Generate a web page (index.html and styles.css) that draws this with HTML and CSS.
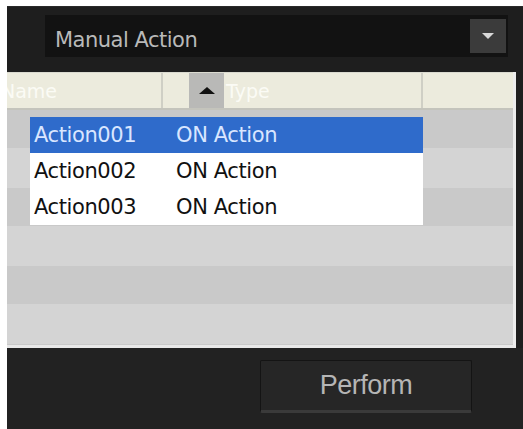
FILE: index.html
```html
<!DOCTYPE html>
<html lang="en">
<head>
    <meta charset="UTF-8">
    <title>Manual Action</title>
    <link rel="stylesheet" href="styles.css">
</head>
<body>

    <div class="panel">
        <div class="combo-row">
            <div class="combo">
                <span class="combo-text">Manual Action</span>
                <span class="combo-btn"><span class="arrow-down"></span></span>
            </div>
        </div>

        <div class="grid">
            <div class="grid-head">
                <div class="col col-name"><span class="head-label">Name</span></div>
                <div class="col col-type">
                    <span class="sort"><span class="arrow-up"></span></span>
                    <span>Type</span>
                </div>
                <div class="col col-extra"></div>
            </div>
            <div class="grid-body">
                <ul class="action-list">
                    <li class="selected"><span class="a-name">Action001</span><span>ON Action</span></li>
                    <li><span class="a-name">Action002</span><span>ON Action</span></li>
                    <li><span class="a-name">Action003</span><span>ON Action</span></li>
                </ul>
            </div>
        </div>

        <div class="footer">
            <button class="perform">Perform</button>
        </div>
    </div>

</body>
</html>
```

FILE: styles.css
```css
body {
    margin: 0;
    background: #fff;
    font-family: "DejaVu Sans", sans-serif;
}

.panel {
    margin: 6px 0 0 7px;
    height: 423px;
    background: #1e1e1e;
    display: flex;
    flex-direction: column;
}

.combo-row {
    padding: 8px 15px 0 38px;
    height: 66px;
    box-sizing: border-box;
    border-top: 1px solid #2a2a2a;
}

.combo {
    height: 42px;
    background: #121212;
    display: flex;
    align-items: center;
    justify-content: space-between;
    padding: 0 2px 0 10px;
    box-sizing: border-box;
}

.combo-text {
    color: #b9b9b9;
    font-size: 21px;
    letter-spacing: -0.5px;
    padding-top: 7px;
}

.combo-btn {
    width: 36px;
    height: 34px;
    background: #3b3b3b;
    display: flex;
    align-items: center;
    justify-content: center;
}

.arrow-down {
    width: 0;
    height: 0;
    border-left: 6px solid transparent;
    border-right: 6px solid transparent;
    border-top: 6px solid #d8d8d8;
}

.grid {
    margin-right: 7px;
    height: 276px;
    background: #cdcdcd;
    border-right: 3px solid #ececec;
    border-bottom: 3px solid #e8e8e8;
    box-sizing: border-box;
    display: flex;
    flex-direction: column;
}

.grid-head {
    height: 38px;
    box-sizing: border-box;
    display: flex;
    background: #ecebdd;
    border-bottom: 2px solid #c4c4bc;
    border-top: 1px solid #dadad0;
}

.col {
    display: flex;
    align-items: center;
    color: #fbfbf5;
    font-size: 19px;
    border-right: 2px solid #cfcfc5;
    box-sizing: border-box;
}

.col-name {
    width: 156px;
    overflow: hidden;
}

/* header text is scrolled a little past the left edge */
.head-label {
    margin-left: -6px;
}

.col-type {
    width: 260px;
    padding-left: 26px;
}

.col-extra {
    flex: 1;
    border-right: none;
}

.sort {
    width: 35px;
    align-self: stretch;
    background: #b9b9b7;
    display: flex;
    align-items: center;
    justify-content: center;
    margin-right: 2px;
}

.arrow-up {
    width: 0;
    height: 0;
    border-left: 8px solid transparent;
    border-right: 8px solid transparent;
    border-bottom: 7px solid #111;
}

.grid-body {
    flex: 1;
    padding: 7px 0 0 23px;
    background: repeating-linear-gradient(#c9c9c9 0 38px, #d4d4d4 38px 78px);
}

.action-list {
    list-style: none;
    margin: 0;
    padding: 0;
    width: 393px;
    background: #fff;
}

.action-list li {
    height: 36px;
    display: flex;
    align-items: center;
    padding-left: 4px;
    font-size: 21px;
    color: #111;
    letter-spacing: -0.4px;
}

.action-list li.selected {
    background: #2f6bcb;
    color: #d9e6ff;
}

.a-name {
    width: 142px;
}

.footer {
    flex: 1;
    background: #222;
    display: flex;
    justify-content: flex-end;
    padding: 12px 51px 0 0;
    box-sizing: border-box;
}

.perform {
    width: 212px;
    height: 53px;
    background: #262626;
    border: 1px solid #141414;
    border-bottom: 3px solid #3a3a3a;
    border-radius: 2px;
    color: #b5b5b5;
    font-family: "Liberation Sans", Arial, sans-serif;
    font-size: 27px;
    letter-spacing: -0.5px;
}
```
